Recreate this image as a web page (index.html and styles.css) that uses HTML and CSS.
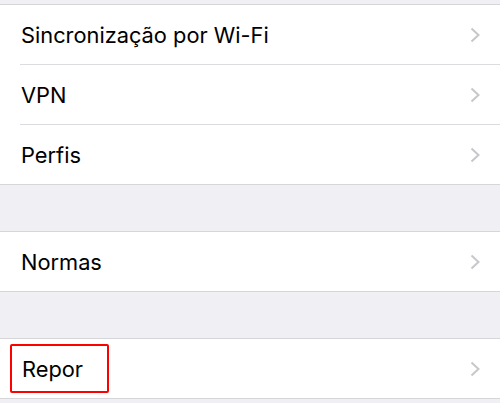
FILE: index.html
```html
<!DOCTYPE html>
<html lang="pt">
<head>
    <meta charset="UTF-8">
    <meta name="viewport" content="width=device-width, initial-scale=1.0">
    <title>Geral</title>
    <link rel="stylesheet" href="styles.css">
</head>
<body>
    <!-- primeira secção -->
    <div class="section section-top">
        <div class="row">
            <span class="label">Sincronização por Wi-Fi</span>
            <svg class="chevron" viewBox="0 0 10 16"><path d="M1.5 1.5 L8.5 8 L1.5 14.5"/></svg>
        </div>
        <div class="row">
            <span class="label">VPN</span>
            <svg class="chevron" viewBox="0 0 10 16"><path d="M1.5 1.5 L8.5 8 L1.5 14.5"/></svg>
        </div>
        <div class="row">
            <span class="label">Perfis</span>
            <svg class="chevron" viewBox="0 0 10 16"><path d="M1.5 1.5 L8.5 8 L1.5 14.5"/></svg>
        </div>
    </div>

    <div class="section">
        <div class="row">
            <span class="label">Normas</span>
            <svg class="chevron" viewBox="0 0 10 16"><path d="M1.5 1.5 L8.5 8 L1.5 14.5"/></svg>
        </div>
    </div>

    <div class="section">
        <div class="row">
            <span class="label highlight">Repor</span>
            <svg class="chevron" viewBox="0 0 10 16"><path d="M1.5 1.5 L8.5 8 L1.5 14.5"/></svg>
        </div>
    </div>
</body>
</html>
```

FILE: styles.css
```css
/* página */
body {
    margin: 0;
    background-color: #efeff4;
    font-family: Inter, "Liberation Sans", Arial, sans-serif;
    overflow: hidden;
}

/* secções da lista */
.section {
    background-color: #ffffff;
    border-top: 1px solid #d6d6da;
    border-bottom: 1px solid #d6d6da;
    margin-top: 45px;
}

.section + .section {
    margin-top: 46px;
}

.section-top {
    margin-top: 4px;
}

/* linhas */
.row {
    display: flex;
    align-items: center;
    height: 59px;
    padding: 0 20px 0 21px;
    position: relative;
}

.row + .row {
    border-top: 1px solid transparent;
}

.row + .row::before {
    content: "";
    position: absolute;
    top: -1px;
    left: 20px;
    right: 0;
    height: 1px;
    background-color: #dcdce0;
}

.label {
    flex: 1;
    font-size: 21.8px;
    color: #000000;
}

/* caixa vermelha à volta de "Repor" */
.highlight {
    flex: none;
    margin-left: -11px;
    padding: 10px 24px 9px 10px;
    border: 2px solid #ff0000;
    border-radius: 2px;
}

.chevron {
    width: 10px;
    height: 16px;
    fill: none;
    stroke: #c7c7cc;
    stroke-width: 2;
}

.highlight + .chevron {
    margin-left: auto;
}
```
